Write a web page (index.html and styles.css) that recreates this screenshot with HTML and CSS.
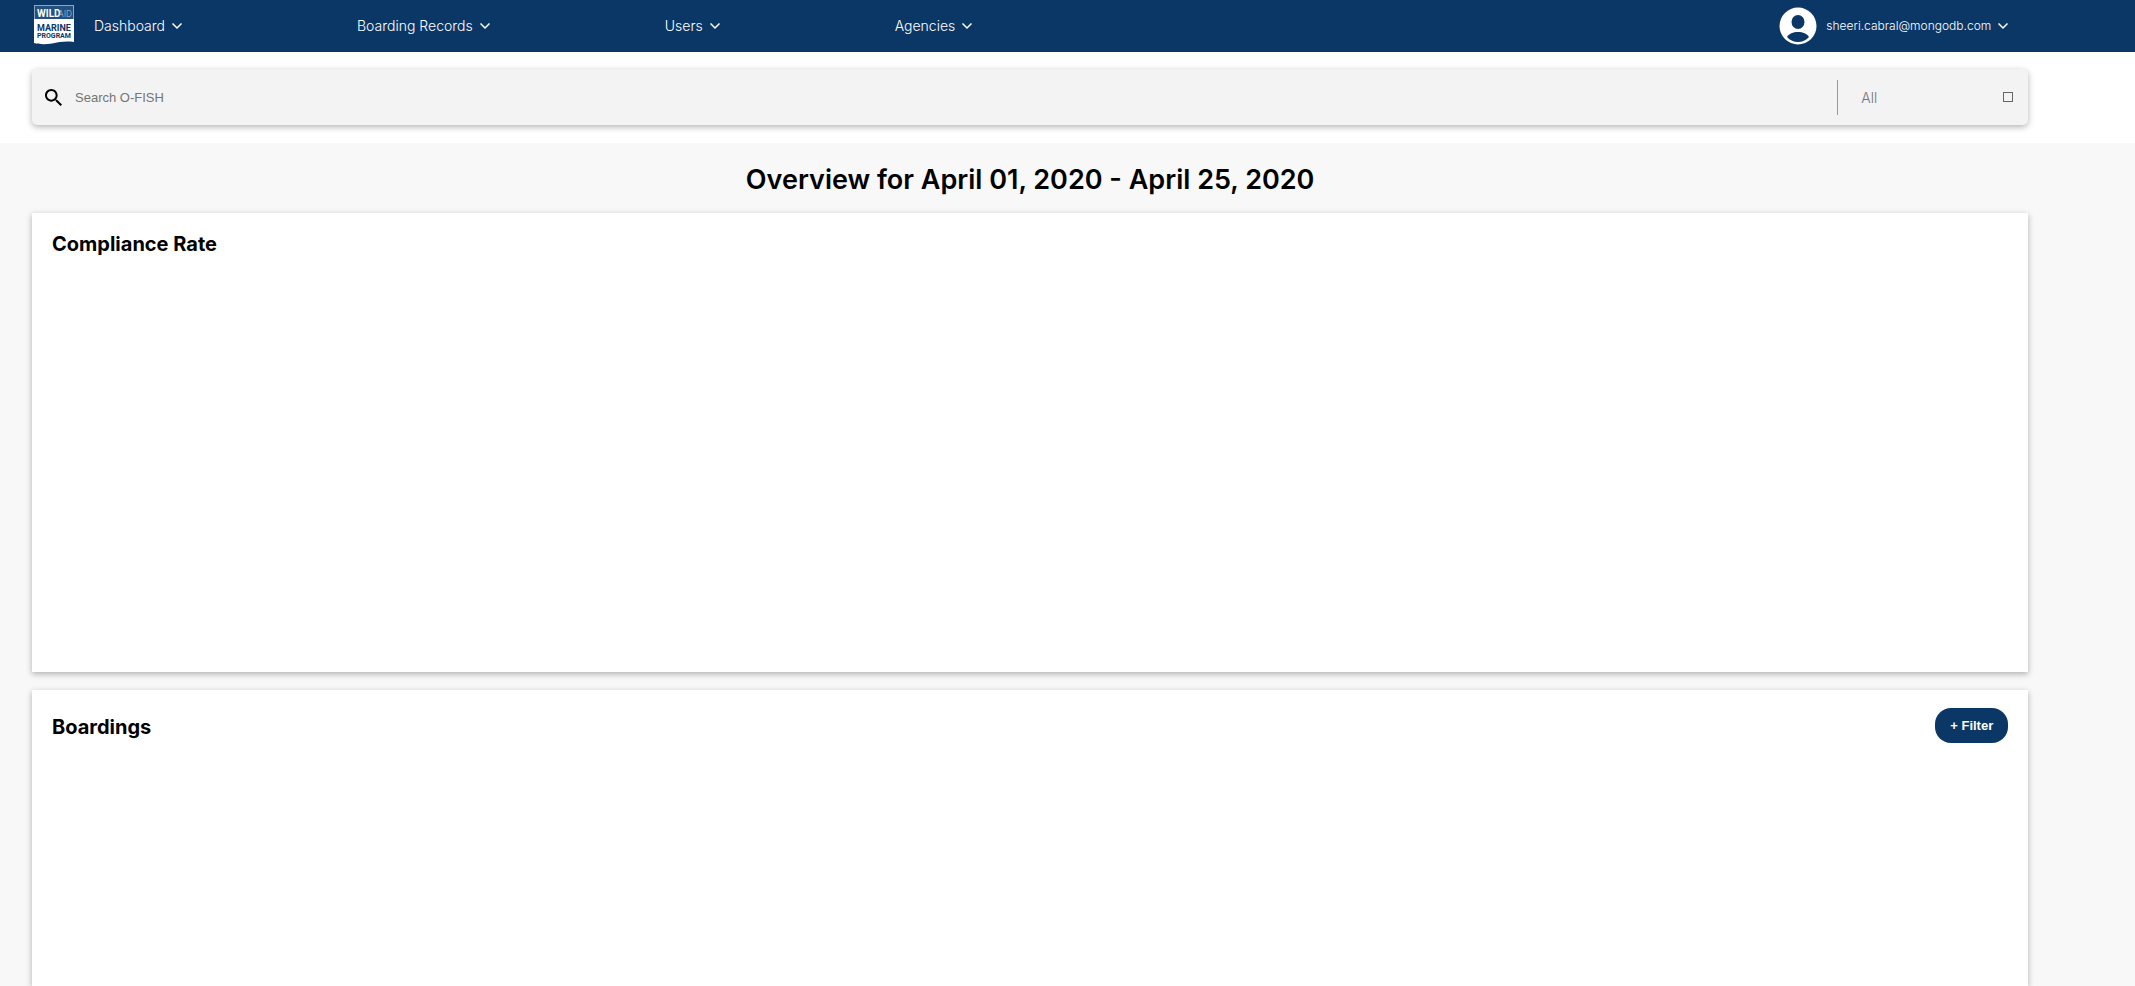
FILE: index.html
```html
<!DOCTYPE html>
<html lang="en">
<head>
<meta charset="utf-8">
<meta name="viewport" content="width=device-width, initial-scale=1">
<title>O-FISH Dashboard</title>
<link rel="stylesheet" href="styles.css">
</head>
<body>
<header class="top-bar">
  <a class="logo" href="#" aria-label="WildAid Marine Program">
    <svg width="40" height="42" viewBox="0 0 40 42" aria-hidden="true">
      <rect x="0.5" y="0.5" width="39" height="14" fill="#23507f" stroke="#8ba4bf"/>
      <path d="M0 14H40V37C32 36 25 37 18 38.500C12 39.500 5 39.500 0 38Z" fill="#fff"/>
      <text class="logo-wild" x="3" y="12">WILD</text>
      <text class="logo-aid" x="24" y="12">AID</text>
      <text class="logo-marine" x="20" y="26">MARINE</text>
      <text class="logo-program" x="20" y="33">PROGRAM</text>
    </svg>
  </a>
  <nav class="menu">
    <button class="menu-item" type="button">Dashboard<svg class="chevron" viewBox="0 0 10 6"><path d="M0.500 0.500L5 5L9.500 0.500"/></svg></button>
    <button class="menu-item" type="button">Boarding Records<svg class="chevron" viewBox="0 0 10 6"><path d="M0.500 0.500L5 5L9.500 0.500"/></svg></button>
    <button class="menu-item" type="button">Users<svg class="chevron" viewBox="0 0 10 6"><path d="M0.500 0.500L5 5L9.500 0.500"/></svg></button>
    <button class="menu-item" type="button">Agencies<svg class="chevron" viewBox="0 0 10 6"><path d="M0.500 0.500L5 5L9.500 0.500"/></svg></button>
  </nav>
  <button class="menu-item account" type="button">
    <svg class="avatar" viewBox="0 0 38 38" aria-hidden="true">
      <circle cx="19" cy="19" r="18.500" fill="#fff"/>
      <ellipse cx="19" cy="15" rx="6.500" ry="7" fill="#0b3767"/>
      <path d="M8 30C10 26.500 14 25 19 25S28 26.500 30 30C27 33.500 23 35 19 35S11 33.500 8 30Z" fill="#0b3767"/>
    </svg>
    <span>sheeri.cabral@mongodb.com</span><svg class="chevron" viewBox="0 0 10 6"><path d="M0.500 0.500L5 5L9.500 0.500"/></svg>
  </button>
</header>
<div class="search-area">
  <form class="search-box">
    <svg class="search-icon" viewBox="3 3 17.500 17.500" aria-hidden="true"><path d="M15.500 14h-.79l-.28-.27C15.410 12.590 16 11.110 16 9.500 16 5.910 13.090 3 9.500 3S3 5.910 3 9.500 5.910 16 9.500 16c1.610 0 3.090-.59 4.230-1.570l.27.28v.79l5 4.990L20.490 19l-4.990-5zm-6 0C7.010 14 5 11.990 5 9.500S7.010 5 9.500 5 14 7.010 14 9.500 11.990 14 9.500 14z"/></svg>
    <input class="search-input" type="text" placeholder="Search O-FISH" aria-label="Search O-FISH">
    <div class="scope">
      <select class="scope-select" aria-label="Search scope"><option>All</option></select>
      <svg class="scope-mark" viewBox="0 0 10 10" aria-hidden="true"><rect x="0.500" y="0.500" width="9" height="9"/></svg>
    </div>
  </form>
</div>
<main class="content">
  <h1 class="title">Overview for April 01, 2020 - April 25, 2020</h1>
  <section class="card compliance">
    <h2 class="card-title">Compliance Rate</h2>
  </section>
  <section class="card boardings">
    <div class="card-head">
      <h2 class="card-title">Boardings</h2>
      <button class="filter" type="button">+ Filter</button>
    </div>
  </section>
</main>
</body>
</html>
```
FILE: styles.css
```css
* { box-sizing: border-box; }

body {
  margin: 0;
  height: 100vh;
  display: flex;
  flex-direction: column;
  background: #f8f8f8;
  color: #000;
  font-family: Inter, "Liberation Sans", sans-serif;
}

.top-bar {
  display: flex;
  align-items: center;
  flex: none;
  height: 52px;
  padding: 0 calc(5% + 20px) 0 calc(1.5% + 2px);
  background: #0b3767;
}

.logo { display: flex; margin-right: 20px; }
.logo text { font-family: Roboto, sans-serif; font-weight: 700; }
.logo-wild { font-size: 10px; fill: #fff; }
.logo .logo-aid { font-size: 9px; font-weight: 300; fill: #b5c5d6; }
.logo-marine { font-size: 9px; fill: #0b3767; text-anchor: middle; }
.logo-program { font-size: 7px; fill: #0b3767; text-anchor: middle; }

.menu { display: flex; gap: 175px; flex: 1; }

.menu-item {
  display: flex;
  align-items: center;
  padding: 0;
  border: 0;
  background: none;
  color: #fff;
  font: 300 14px/20px Inter, sans-serif;
  white-space: nowrap;
}

.chevron {
  width: 10px;
  height: 6px;
  margin-left: 7px;
  overflow: visible;
  fill: none;
  stroke: #fff;
  stroke-width: 1.5;
}

.account { font-size: 12px; }
.avatar { width: 38px; height: 38px; margin-right: 9px; }

.search-area {
  flex: none;
  padding: 17px 5% 18px 1.5%;
  background: #fff;
}

.search-box {
  display: flex;
  align-items: center;
  height: 56px;
  margin: 0;
  padding-left: 13px;
  border-radius: 5px;
  background: #f3f3f3;
  box-shadow: 0 2px 6px rgba(0, 0, 0, 0.3);
}

.search-icon { width: 17px; height: 17px; }

.search-input {
  flex: 1;
  min-width: 0;
  margin-left: 13px;
  padding: 2px 0 0;
  border: 0;
  outline: 0;
  background: none;
  font: 13px/20px "Liberation Sans", Arial, sans-serif;
}
.search-input::placeholder { color: #757575; }

.scope {
  display: flex;
  align-items: center;
  width: 191px;
  height: 35px;
  padding: 0 15px 0 23px;
  border-left: 1px solid #999;
}

.scope-select {
  flex: 1;
  appearance: none;
  padding: 2px 0 0;
  border: 0;
  background: none;
  color: #757575;
  font: 300 14px/20px Inter, sans-serif;
}

.scope-mark { width: 10px; height: 10px; fill: none; stroke: #666; }

.content {
  flex: 1;
  display: flex;
  flex-direction: column;
  min-height: 0;
  padding: 0 5% 0 1.5%;
}

.title {
  margin: 0;
  padding: 20px 0 16px;
  font-size: 27px;
  line-height: 34px;
  font-weight: 600;
  text-align: center;
}

.card {
  padding: 18px 20px;
  background: #fff;
  box-shadow: 0 2px 6px rgba(0, 0, 0, 0.3);
}

.compliance { flex: none; min-height: 459px; margin-bottom: 18px; }
.boardings { flex: 1; }

.card-head { display: flex; justify-content: space-between; align-items: flex-end; }

.card-title {
  margin: 0;
  font-size: 20px;
  line-height: 26px;
  font-weight: 700;
}

.card-head .card-title { line-height: 32px; }

.filter {
  height: 35px;
  padding: 0 15px;
  border: 0;
  border-radius: 16px;
  background: #0b3767;
  color: #fff;
  font: bold 13px/20px "Liberation Sans", Arial, sans-serif;
}
```
